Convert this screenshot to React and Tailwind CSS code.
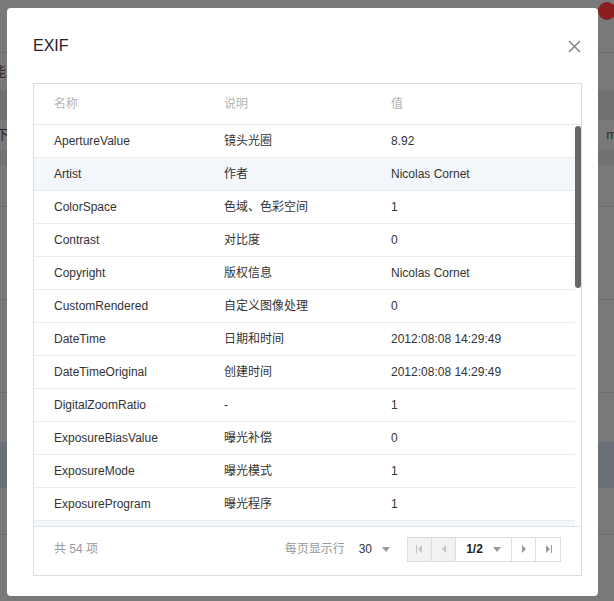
import React from 'react';

const rows = [
    ['ApertureValue', '镜头光圈', '8.92'],
    ['Artist', '作者', 'Nicolas Cornet'],
    ['ColorSpace', '色域、色彩空间', '1'],
    ['Contrast', '对比度', '0'],
    ['Copyright', '版权信息', 'Nicolas Cornet'],
    ['CustomRendered', '自定义图像处理', '0'],
    ['DateTime', '日期和时间', '2012:08:08 14:29:49'],
    ['DateTimeOriginal', '创建时间', '2012:08:08 14:29:49'],
    ['DigitalZoomRatio', '-', '1'],
    ['ExposureBiasValue', '曝光补偿', '0'],
    ['ExposureMode', '曝光模式', '1'],
    ['ExposureProgram', '曝光程序', '1'],
    ['FNumber', '光圈', '8'],
];

function Caret() {
    return (
        <svg width="8" height="5" viewBox="0 0 8 5" className="ml-[10px]">
            <path d="M0 0 L8 0 L4 5 Z" fill="#999" />
        </svg>
    );
}

function PageIcon({ dir, bar, color }) {
    const tri = dir === 'left' ? 'M6 0 L6 8 L2 4 Z' : 'M2 0 L2 8 L6 4 Z';
    const barX = dir === 'left' ? 0 : 7;
    return (
        <svg width="8" height="8" viewBox="0 0 8 8">
            <path d={tri} fill={color} />
            {bar && <rect x={barX} y="0" width="1" height="8" fill={color} />}
        </svg>
    );
}

function Backdrop() {
    // dimmed page behind the dialog
    return (
        <div className="flex flex-col text-[13px] text-[#2a2a2a]">
            <div className="h-[53px] border-b border-[#6d6d6d] flex justify-end">
                <div className="w-[18px] h-[18px] rounded-full bg-[#8a1f1f] mt-[2px] -mr-[2px]"></div>
            </div>
            <div className="h-[37px] flex items-center justify-between">
                <span className="-ml-[7px]">能</span>
            </div>
            <div className="h-[30px] bg-[#707173]"></div>
            <div className="h-[30px] flex items-center justify-between">
                <span className="-ml-[4px]">下</span>
                <span className="-mr-[3px]">m</span>
            </div>
            <div className="h-[15px] bg-[#717274]"></div>
            <div className="h-[42px] border-b border-[#6d6d6d]"></div>
            <div className="h-[93px] border-b border-[#6d6d6d]"></div>
            <div className="h-[93px] border-b border-[#6d6d6d] flex items-end pb-[10px]">
                <span className="-ml-[12px]">or</span>
            </div>
            <div className="h-[49px]"></div>
            <div className="h-[46px] bg-[#6b7078]"></div>
            <div className="h-[47px] border-b border-[#6d6d6d] flex items-center">
                <span className="-ml-[12px]">or</span>
            </div>
            <div className="h-[55px] flex items-end justify-end">
                <span className="mr-[24px] -mb-[6px]">每页显示行</span>
            </div>
        </div>
    );
}

export default function App() {
    return (
        <div className="relative h-[601px] w-full overflow-hidden bg-[#797979] font-['Liberation_Sans','Noto_Sans_CJK_SC',sans-serif]">
            <Backdrop />

            {/* Dialog */}
            <div className="absolute left-[7px] top-[8px] w-[591px] h-[588px] bg-white rounded-[4px] pt-[26px] pl-[26px] pr-[16px]">
                <div className="h-[24px] flex items-center justify-between">
                    <div className="text-[16px] text-[#222] font-light">EXIF</div>
                    <svg width="13" height="13" viewBox="0 0 13 13" className="mr-[1px]">
                        <path d="M1 1 L12 12 M12 1 L1 12" stroke="#888" strokeWidth="1.6" />
                    </svg>
                </div>

                <div className="mt-[25px] h-[493px] border border-[#dcdcdc] flex flex-col text-[12px]">
                    <div className="h-[41px] shrink-0 flex items-center pl-[20px] border-b border-[#e6e6e6] text-[#b3b3b3]">
                        <div className="w-[170px]">名称</div>
                        <div className="w-[167px]">说明</div>
                        <div>值</div>
                    </div>

                    <div className="h-[401px] shrink-0 flex overflow-hidden">
                        <div className="flex-1 flex flex-col">
                            {rows.map((r, i) => (
                                <div
                                    key={r[0]}
                                    className={`h-[33px] shrink-0 flex items-center pl-[20px] border-b border-[#e9ecef] text-[#333] ${i === 1 || i === 12 ? 'bg-[#f3f6fa]' : ''}`}
                                >
                                    <div className="w-[170px]">{r[0]}</div>
                                    <div className="w-[167px]">{r[1]}</div>
                                    <div>{r[2]}</div>
                                </div>
                            ))}
                        </div>
                        <div className="w-[6px] shrink-0 pt-[1px]">
                            <div className="h-[162px] rounded-full bg-[#666]"></div>
                        </div>
                    </div>

                    <div className="flex-1 border-t border-[#e2e2e2] flex items-center justify-between pl-[20px] pr-[20px] pb-[4px]">
                        <div className="text-[#999]">共 54 项</div>
                        <div className="flex items-center">
                            <span className="text-[#999]">每页显示行</span>
                            <span className="ml-[14px] text-[#333]">30</span>
                            <Caret />
                            <div className="ml-[17px] h-[25px] flex border border-[#ddd]">
                                <div className="w-[24px] flex items-center justify-center bg-[#f2f2f2] border-r border-[#ddd]">
                                    <PageIcon dir="left" bar color="#c4c4c4" />
                                </div>
                                <div className="w-[24px] flex items-center justify-center bg-[#f2f2f2] border-r border-[#ddd]">
                                    <PageIcon dir="left" color="#c4c4c4" />
                                </div>
                                <div className="w-[56px] flex items-center justify-center border-r border-[#ddd] text-[#222] font-bold">
                                    <span>1/2</span>
                                    <Caret />
                                </div>
                                <div className="w-[24px] flex items-center justify-center border-r border-[#ddd]">
                                    <PageIcon dir="right" color="#999" />
                                </div>
                                <div className="w-[24px] flex items-center justify-center">
                                    <PageIcon dir="right" bar color="#999" />
                                </div>
                            </div>
                        </div>
                    </div>
                </div>
            </div>
        </div>
    );
}
